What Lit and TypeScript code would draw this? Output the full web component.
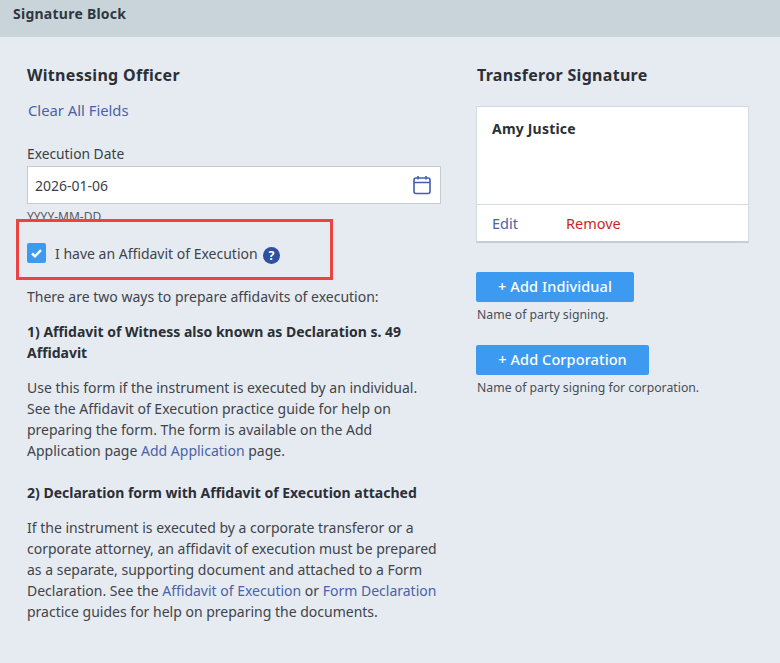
import { LitElement, html, css } from "lit";
import { customElement } from "lit/decorators.js";

@customElement("app-root")
export class AppRoot extends LitElement {
  static styles = css`
    :host {
      display: block;
      width: 780px;
      height: 663px;
      overflow: hidden;
      background: #e6ebf2;
      font-family: "Noto Sans", sans-serif;
      font-size: 14px;
      line-height: 21px;
      color: #40444a;
    }
    * { box-sizing: border-box; }
    .header {
      height: 37px;
      background: #c9d4da;
      padding: 3px 13px 0;
      font-size: 14px;
      line-height: 21px;
      font-weight: 700;
      letter-spacing: 0.25px;
      color: #2f3740;
    }
    .content {
      display: flex;
      padding: 27px 0 0 27px;
    }
    .left { width: 414px; flex: none; }
    .right { width: 273px; margin-left: 35px; flex: none; }
    h2 {
      margin: 0;
      font-size: 16px;
      line-height: 22px;
      font-weight: 700;
      letter-spacing: 0.3px;
      color: #2b2f36;
    }
    .right h2 { margin-left: 1px; }
    a { color: #4a62a8; text-decoration: none; }
    .clear { display: block; margin: 13px 0 0 1px; font-size: 14.8px; line-height: 22px; }
    .label { margin-top: 23px; line-height: 20px; font-size: 13.8px; color: #3a3f46; }
    .input {
      margin-top: 2px;
      height: 38px;
      background: #fff;
      border: 1px solid #c4ccd2;
      display: flex;
      align-items: center;
      justify-content: space-between;
      padding: 0 9px 0 7px;
      font-size: 14px;
      color: #3a3f46;
    }
    .input svg { display: block; }
    .hint { margin-top: 5px; height: 16px; font-size: 12px; line-height: 16px; color: #555a60; }
    .check-row {
      position: relative;
      margin-top: 14px;
      height: 28px;
      display: flex;
      align-items: center;
      font-size: 14px;
    }
    .highlight {
      position: absolute;
      left: -11px;
      top: -20px;
      width: 317px;
      height: 61px;
      border: 3px solid #ea4340;
      background: #e6ebf2;
    }
    .box {
      position: relative;
      width: 19px;
      height: 20px;
      background: #3c9bf0;
      border-radius: 2px;
      display: flex;
      align-items: center;
      justify-content: center;
    }
    .check-text { position: relative; margin-left: 9px; }
    .help { position: relative; margin: 4px 0 0 5px; display: block; }
    p { margin: 0; }
    .intro { margin-top: 19px; }
    .sub { font-weight: 700; color: #2b2f36; }
    .s1 { margin-top: 14px; }
    .b1 { margin-top: 14px; }
    .s2 { margin-top: 21px; }
    .b2 { margin-top: 14px; }
    .card {
      margin-top: 20px;
      height: 137px;
      background: #fff;
      border: 1px solid #d3dbe2;
      border-bottom: 2px solid #c3cdd5;
      display: flex;
      flex-direction: column;
    }
    .card-name {
      flex: 1;
      padding: 11px 14px 11px 15px;
      font-weight: 700;
      letter-spacing: 0.2px;
      color: #2b2f36;
      border-bottom: 1px solid #d3dbe2;
    }
    .card-actions {
      height: 36px;
      display: flex;
      align-items: center;
      padding-left: 15px;
      font-size: 14.5px;
    }
    .remove { color: #cf1f1f; margin-left: 48px; }
    button {
      display: block;
      height: 30px;
      border: none;
      border-radius: 2px;
      background: #3c9bf0;
      color: #fff;
      font: 500 14.5px/28px "Noto Sans", sans-serif;
      letter-spacing: 0.1px;
      padding: 0 0 2px;
    }
    .btn-i { width: 158px; margin-top: 29px; }
    .btn-c { width: 173px; margin-top: 20px; }
    .note { margin: 3px 0 0 1px; font-size: 12.25px; line-height: 20px; color: #494e55; }
  `;

  render() {
    return html`
      <div class="header">Signature Block</div>
      <div class="content">
        <div class="left">
          <h2>Witnessing Officer</h2>
          <a class="clear">Clear All Fields</a>
          <div class="label">Execution Date</div>
          <div class="input">
            <span>2026-01-06</span>
            <svg width="18" height="20" viewBox="0 0 18 20" fill="none" stroke="#3f5fae" stroke-width="1.6">
              <rect x="1" y="3" width="16" height="15.5" rx="2"></rect>
              <path d="M1 7.5H17M5 1V4.5M13 1V4.5"></path>
            </svg>
          </div>
          <div class="hint">YYYY-MM-DD</div>
          <div class="check-row">
            <div class="highlight"></div>
            <div class="box">
              <svg width="11" height="9" viewBox="0 0 11 9" fill="none" stroke="#fff" stroke-width="2.4">
                <path d="M1 4.5L4 7.3L10 1.2"></path>
              </svg>
            </div>
            <span class="check-text">I have an Affidavit of Execution</span>
            <svg class="help" width="17" height="17" viewBox="0 0 17 17">
              <circle cx="8.5" cy="8.5" r="8.5" fill="#2f4f9f"></circle>
              <text x="8.5" y="13" text-anchor="middle" font-family="Noto Sans" font-weight="700" font-size="12.5" fill="#fff">?</text>
            </svg>
          </div>
          <p class="intro">There are two ways to prepare affidavits of execution:</p>
          <p class="sub s1">1) Affidavit of Witness also known as Declaration s. 49 Affidavit</p>
          <p class="b1">Use this form if the instrument is executed by an individual. See the Affidavit of Execution practice guide for help on preparing the form. The form is available on the Add Application page <a>Add Application</a> page.</p>
          <p class="sub s2">2) Declaration form with Affidavit of Execution attached</p>
          <p class="b2">If the instrument is executed by a corporate transferor or a corporate attorney, an affidavit of execution must be prepared as a separate, supporting document and attached to a Form Declaration. See the <a>Affidavit of Execution</a> or <a>Form Declaration</a> practice guides for help on preparing the documents.</p>
        </div>
        <div class="right">
          <h2>Transferor Signature</h2>
          <div class="card">
            <div class="card-name">Amy Justice</div>
            <div class="card-actions"><a>Edit</a><a class="remove">Remove</a></div>
          </div>
          <button class="btn-i">+ Add Individual</button>
          <div class="note">Name of party signing.</div>
          <button class="btn-c">+ Add Corporation</button>
          <div class="note">Name of party signing for corporation.</div>
        </div>
      </div>
    `;
  }
}
